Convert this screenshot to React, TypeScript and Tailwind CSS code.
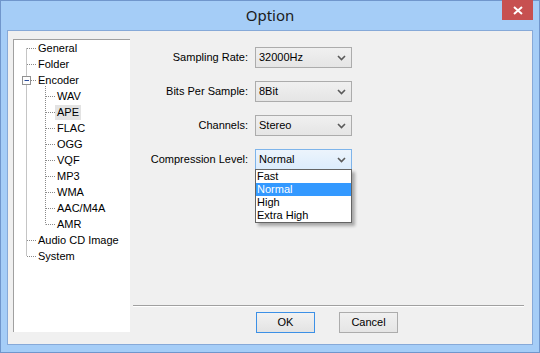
import clsx from 'clsx';

const treeRows: { label: string; level: number; selected?: boolean }[] = [
  { label: 'General', level: 0 },
  { label: 'Folder', level: 0 },
  { label: 'Encoder', level: 0 },
  { label: 'WAV', level: 1 },
  { label: 'APE', level: 1, selected: true },
  { label: 'FLAC', level: 1 },
  { label: 'OGG', level: 1 },
  { label: 'VQF', level: 1 },
  { label: 'MP3', level: 1 },
  { label: 'WMA', level: 1 },
  { label: 'AAC/M4A', level: 1 },
  { label: 'AMR', level: 1 },
  { label: 'Audio CD Image', level: 0 },
  { label: 'System', level: 0 },
];

const fields = [
  { label: 'Sampling Rate:', value: '32000Hz' },
  { label: 'Bits Per Sample:', value: '8Bit' },
  { label: 'Channels:', value: 'Stereo' },
  { label: 'Compression Level:', value: 'Normal', open: true },
];

const options = ['Fast', 'Normal', 'High', 'Extra High'];

function Chevron() {
  return (
    <svg width="9" height="6" viewBox="0 0 9 6" className="shrink-0">
      <path d="M1 1 L4.5 4.5 L8 1" fill="none" stroke="#5a5a5a" strokeWidth="1.6" />
    </svg>
  );
}

function TreeLines() {
  const rowY = (i: number) => 8 + 16 * i + 0.5;
  const rootRows = [0, 1, 2, 12, 13];
  const childRows = [3, 4, 5, 6, 7, 8, 9, 10, 11];
  return (
    <svg width="60" height="230" className="absolute left-0 top-0 pointer-events-none">
      <g stroke="#8a8a8a" strokeWidth="1" strokeDasharray="1 1" fill="none">
        <line x1="12.5" y1={rowY(0)} x2="12.5" y2={rowY(13)} />
        {rootRows.map((r) => (
          <line key={r} x1={r === 2 ? 17 : 13} y1={rowY(r)} x2="23" y2={rowY(r)} />
        ))}
        <line x1="31.5" y1="46" x2="31.5" y2={rowY(11)} />
        {childRows.map((r) => (
          <line key={r} x1="32" y1={rowY(r)} x2="42" y2={rowY(r)} />
        ))}
      </g>
      <rect x="8.5" y="36.5" width="8" height="8" fill="#fdfdfd" stroke="#919191" />
      <line x1="10.5" y1="40.5" x2="15" y2="40.5" stroke="#2a4c9c" strokeWidth="1" />
    </svg>
  );
}

export default function App() {
  return (
    <div className="w-[540px] h-[353px] bg-[#a5cdf7] border border-[#7096cc] flex flex-col font-['Liberation_Sans',Arial,sans-serif] text-[11px] text-black select-none">
      <div className="h-[29px] grid grid-cols-[1fr_auto_1fr]">
        <div />
        <div className="pt-[3px] text-[15px] text-[#1b1b1b] font-['Noto_Sans','Open_Sans',sans-serif] leading-[22px]">
          Option
        </div>
        <div className="flex justify-end pr-[6px]">
          <div className="w-[31px] h-[20px] -mt-px bg-[#c75050] flex items-center justify-center">
            <svg width="10" height="9" viewBox="0 0 10 9">
              <path d="M1 1 L9 8 M9 1 L1 8" stroke="#fff" strokeWidth="2" />
            </svg>
          </div>
        </div>
      </div>

      <div className="mx-[6px] h-[315px] bg-[#f0f0f0] border border-[#86a9d8] flex relative">
        <div className="ml-[5px] mt-[8px] w-[117px] h-[293px] bg-white border-t border-l border-[#a0a0a0] relative">
          <TreeLines />
          <div className="flex flex-col">
            {treeRows.map((row) => (
              <div
                key={row.label}
                className={clsx('h-[16px] flex items-center', row.level === 0 ? 'pl-[22px]' : 'pl-[41px]')}
              >
                <span className={clsx('px-[2px] h-[15px] leading-[15px]', row.selected && 'bg-[#e3e3e3]')}>
                  {row.label}
                </span>
              </div>
            ))}
          </div>
        </div>

        <div className="flex-1 flex flex-col">
          <div className="pt-[16px] grid grid-cols-[118px_97px] gap-x-[7px] gap-y-[13px]">
            {fields.map((f) => (
              <div key={f.label} className="contents">
                <div className="h-[21px] flex items-center justify-end">{f.label}</div>
                <div className="relative">
                  <div
                    className={clsx(
                      'h-[21px] border flex items-center justify-between pl-[3px] pr-[5px]',
                      f.open
                        ? 'border-[#7eb4ea] bg-gradient-to-b from-[#ecf4fc] to-[#dcecfc]'
                        : 'border-[#acacac] bg-gradient-to-b from-[#f0f0f0] to-[#e5e5e5]'
                    )}
                  >
                    <span>{f.value}</span>
                    <Chevron />
                  </div>
                  {f.open && (
                    <div className="absolute left-0 top-[20px] w-[97px] bg-white border border-[#646464] shadow-[3px_3px_3px_rgba(0,0,0,0.3)] z-10 flex flex-col">
                      {options.map((o) => (
                        <div
                          key={o}
                          className={clsx(
                            'h-[13px] leading-[13px] pl-[1px]',
                            o === 'Normal' && 'bg-[#3399ff] text-white'
                          )}
                        >
                          {o}
                        </div>
                      ))}
                    </div>
                  )}
                </div>
              </div>
            ))}
          </div>

          <div className="flex-1" />

          <div className="ml-[3px] mr-[8px] border-t border-[#a0a0a0] border-b border-b-white" />
          <div className="pt-[5px] pb-[11px] pl-[126px] flex gap-[24px]">
            <button className="w-[59px] h-[21px] border border-[#3c90e6] bg-gradient-to-b from-[#f2f2f2] to-[#e3e3e3] text-[11px]">
              OK
            </button>
            <button className="w-[59px] h-[21px] border border-[#acacac] bg-gradient-to-b from-[#f0f0f0] to-[#e5e5e5] text-[11px]">
              Cancel
            </button>
          </div>
        </div>
      </div>
    </div>
  );
}
